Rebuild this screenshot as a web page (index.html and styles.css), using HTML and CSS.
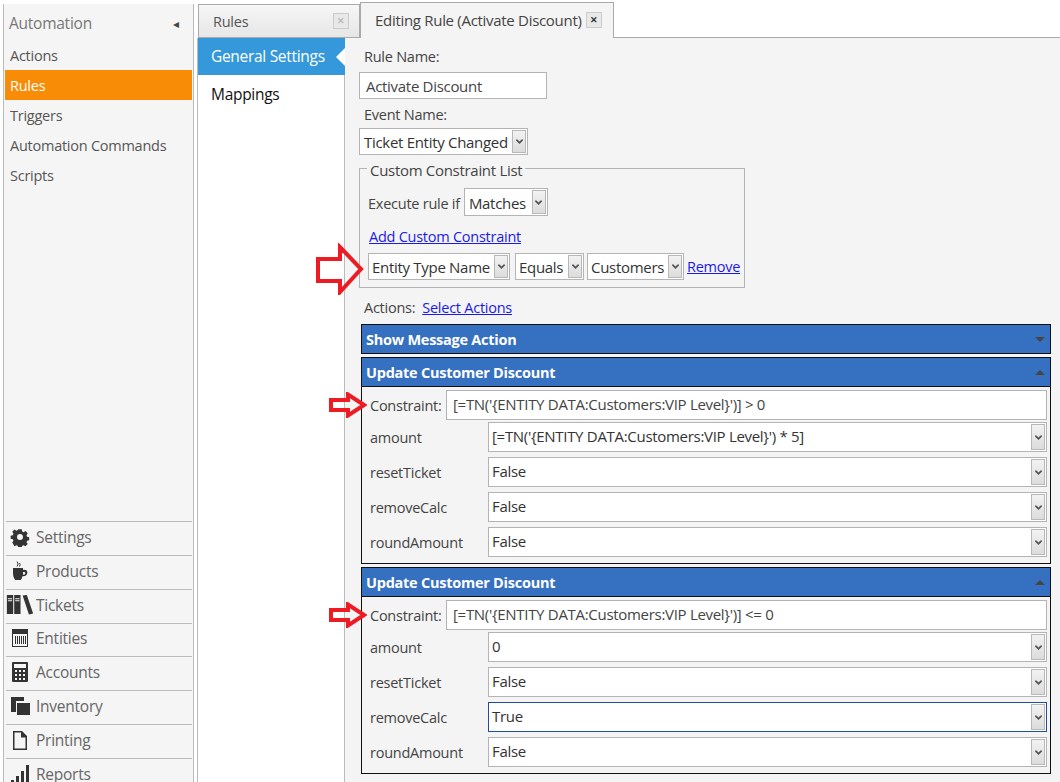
FILE: index.html
```html
<!DOCTYPE html>
<html lang="en">
<head>
    <meta charset="UTF-8">
    <title>Editing Rule</title>
    <link rel="stylesheet" href="styles.css">
</head>
<body>
    <svg width="0" height="0" class="defs">
        <symbol id="chev" viewBox="0 0 7 5"><path d="M0 0.5 L1.5 0.5 L3.5 2.5 L5.5 0.5 L7 0.5 L7 1.5 L3.5 5 L0 1.5 Z"/></symbol>
    </svg>

    <aside class="sidebar">
        <div class="side-title"><span>Automation</span><span class="collapse">&#9666;</span></div>
        <div class="side-item">Actions</div>
        <div class="side-item active">Rules</div>
        <div class="side-item">Triggers</div>
        <div class="side-item">Automation Commands</div>
        <div class="side-item">Scripts</div>

        <div class="side-bottom">
            <div class="nav-item">
                <svg class="nav-icon" viewBox="0 0 20 20"><path fill-rule="evenodd" d="M8 1h4l.6 2.6 1.600.7 2.300-1.400 2.600 2.800-1.400 2.200.6 1.700 2.500.6v3.600l-2.500.6-.6 1.700 1.400 2.200-2.700 2.700-2.200-1.400-1.700.7-.5 2.500H8l-.6-2.500-1.700-.7-2.200 1.400L.9 16.600l1.400-2.200-.7-1.700L-1 12V8.400l2.600-.6.7-1.700L.9 3.900l2.600-2.800 2.200 1.400 1.700-.7zM10 6.500a3.500 3.500 0 1 0 0 7 3.500 3.500 0 0 0 0-7z" transform="translate(1.500 1.500) scale(.85)"/></svg>
                <span>Settings</span>
            </div>
            <div class="nav-item">
                <svg class="nav-icon" viewBox="0 0 20 20"><path d="M3 7h10v2c3.200-.6 4.800 1 4.300 3.200-.4 2.200-2.500 3.200-4.700 2.900-.3 2-1.300 3.300-2 3.900H5.500C4 18 3 15 3 12zM13 11v2.600c1.700.2 2.300-.5 2.300-1.400S14.700 10.700 13 11z"/><path d="M7 .5l1.200 2.500-1.200 2.500M9.500 2l.7 1.700-.7 1.800" fill="none" stroke="#222" stroke-width=".9"/></svg>
                <span>Products</span>
            </div>
            <div class="nav-item">
                <svg class="nav-icon wide" viewBox="0 0 25 20"><path fill-rule="evenodd" d="M0 1h6v18H0zM1 4v1h4V4zM1 6v1h4V6zM7 1h6v18H7zM8 4v1h4V4zM8 6v1h4V6z"/><path d="M15 1.500l4-.5 6 17.500-4 1z"/></svg>
                <span>Tickets</span>
            </div>
            <div class="nav-item">
                <svg class="nav-icon" viewBox="0 0 20 20"><path fill-rule="evenodd" d="M2 1h16v18H2zM3 6v12h14V6z"/><path d="M5 8h1v8H5zM7 8h1v8H7zM9 8h1v8H9zM11 8h1v8h-1zM13 8h1v8h-1zM15 8h1v8h-1z"/></svg>
                <span>Entities</span>
            </div>
            <div class="nav-item">
                <svg class="nav-icon" viewBox="0 0 20 20"><path fill-rule="evenodd" d="M3 0h14a1 1 0 0 1 1 1v18a1 1 0 0 1-1 1H3a1 1 0 0 1-1-1V1a1 1 0 0 1 1-1zM4 2v4h12V2zM5 8v2h2V8zM9 8v2h2V8zM13 8v2h2V8zM5 12v2h2v-2zM9 12v2h2v-2zM13 12v2h2v-2zM5 16v2h2v-2zM9 16v2h2v-2zM13 16v2h2v-2z"/></svg>
                <span>Accounts</span>
            </div>
            <div class="nav-item">
                <svg class="nav-icon" viewBox="0 0 22 20"><path d="M2 1h13v4H7v11H2z"/><path d="M8 7h13v12H8z"/></svg>
                <span>Inventory</span>
            </div>
            <div class="nav-item">
                <svg class="nav-icon" viewBox="0 0 20 20"><path fill-rule="evenodd" d="M3 1h9l5 5v14H3zM4.500 2.500v16h11V7.500H11v-5z"/></svg>
                <span>Printing</span>
            </div>
            <div class="nav-item">
                <svg class="nav-icon" viewBox="0 0 20 20"><path d="M1 16h3v4H1zM6 12h3v8H6zM11 7h3v13h-3zM16 1h3v19h-3z"/></svg>
                <span>Reports</span>
            </div>
        </div>
    </aside>

    <main class="main">
        <div class="tabs">
            <div class="tab tab-off"><span>Rules</span><span class="tab-x">&#10005;</span></div>
            <div class="tab tab-on"><span>Editing Rule (Activate Discount)</span><span class="tab-x">&#10005;</span></div>
            <div class="tabs-rest"></div>
        </div>

        <div class="work">
            <nav class="subnav">
                <div class="subnav-item selected">General Settings</div>
                <div class="subnav-item">Mappings</div>
            </nav>

            <section class="editor">
                <div class="field-label first">Rule Name:</div>
                <div class="textbox name-box">Activate Discount</div>
                <div class="field-label event">Event Name:</div>
                <div class="combo event-combo"><span class="combo-text">Ticket Entity Changed</span><span class="combo-btn"><svg><use href="#chev"/></svg></span></div>

                <fieldset class="group">
                    <legend>Custom Constraint List</legend>
                    <div class="exec-row">
                        <span class="exec-label">Execute rule if</span>
                        <div class="combo match-combo"><span class="combo-text">Matches</span><span class="combo-btn"><svg><use href="#chev"/></svg></span></div>
                    </div>
                    <a class="link add-link" href="#">Add Custom Constraint</a>
                    <div class="constraint-row">
                        <div class="combo c1"><span class="combo-text">Entity Type Name</span><span class="combo-btn"><svg><use href="#chev"/></svg></span></div>
                        <div class="combo c2"><span class="combo-text">Equals</span><span class="combo-btn"><svg><use href="#chev"/></svg></span></div>
                        <div class="combo c3"><span class="combo-text">Customers</span><span class="combo-btn"><svg><use href="#chev"/></svg></span></div>
                        <a class="link" href="#">Remove</a>
                    </div>
                    <svg class="arrow arrow-big" viewBox="0 0 48 52"><path d="M2 16H24V4L45 26 24 49V38H2Z" fill="none" stroke="#ed1c24" stroke-width="4"/></svg>
                </fieldset>

                <div class="actions-line"><span>Actions:</span><a class="link" href="#">Select Actions</a></div>

                <div class="panel">
                    <div class="panel-head"><span>Show Message Action</span><span class="caret down"></span></div>
                </div>

                <div class="panel">
                    <div class="panel-head"><span>Update Customer Discount</span><span class="caret up"></span></div>
                    <div class="panel-body">
                        <div class="row con-row">
                            <label>Constraint:</label>
                            <div class="textbox grow">[=TN('{ENTITY DATA:Customers:VIP Level}')] &gt; 0</div>
                        </div>
                        <div class="row">
                            <label>amount</label>
                            <div class="combo grow"><span class="combo-text">[=TN('{ENTITY DATA:Customers:VIP Level}') * 5]</span><span class="combo-btn"><svg><use href="#chev"/></svg></span></div>
                        </div>
                        <div class="row">
                            <label>resetTicket</label>
                            <div class="combo grow"><span class="combo-text">False</span><span class="combo-btn"><svg><use href="#chev"/></svg></span></div>
                        </div>
                        <div class="row">
                            <label>removeCalc</label>
                            <div class="combo grow"><span class="combo-text">False</span><span class="combo-btn"><svg><use href="#chev"/></svg></span></div>
                        </div>
                        <div class="row">
                            <label>roundAmount</label>
                            <div class="combo grow"><span class="combo-text">False</span><span class="combo-btn"><svg><use href="#chev"/></svg></span></div>
                        </div>
                        <svg class="arrow arrow-small" viewBox="0 0 38 26"><path d="M2 8H19V2.500L35 13 19 23.500V18H2Z" fill="none" stroke="#ed1c24" stroke-width="4"/></svg>
                    </div>
                </div>

                <div class="panel">
                    <div class="panel-head"><span>Update Customer Discount</span><span class="caret up"></span></div>
                    <div class="panel-body">
                        <div class="row con-row">
                            <label>Constraint:</label>
                            <div class="textbox grow">[=TN('{ENTITY DATA:Customers:VIP Level}')] &lt;= 0</div>
                        </div>
                        <div class="row">
                            <label>amount</label>
                            <div class="combo grow"><span class="combo-text">0</span><span class="combo-btn"><svg><use href="#chev"/></svg></span></div>
                        </div>
                        <div class="row">
                            <label>resetTicket</label>
                            <div class="combo grow"><span class="combo-text">False</span><span class="combo-btn"><svg><use href="#chev"/></svg></span></div>
                        </div>
                        <div class="row">
                            <label>removeCalc</label>
                            <div class="combo grow focused"><span class="combo-text">True</span><span class="combo-btn"><svg><use href="#chev"/></svg></span></div>
                        </div>
                        <div class="row">
                            <label>roundAmount</label>
                            <div class="combo grow"><span class="combo-text">False</span><span class="combo-btn"><svg><use href="#chev"/></svg></span></div>
                        </div>
                        <svg class="arrow arrow-small" viewBox="0 0 38 26"><path d="M2 8H19V2.500L35 13 19 23.500V18H2Z" fill="none" stroke="#ed1c24" stroke-width="4"/></svg>
                    </div>
                </div>
            </section>
        </div>
    </main>
</body>
</html>
```

FILE: styles.css
```css
* {
    box-sizing: border-box;
}

html, body {
    margin: 0;
    padding: 0;
    height: 782px;
    overflow: hidden;
}

body {
    display: flex;
    background: white;
    font-family: "Open Sans", "Noto Sans", sans-serif;
    font-size: 14.500px;
    letter-spacing: -0.25px;
    color: #444;
}

.defs {
    position: absolute;
}

/* left menu */
.sidebar {
    width: 191px;
    height: 778px;
    margin: 4px 0 0 3px;
    background: #f5f5f5;
    border-left: 1px solid #bbb;
    border-right: 1px solid #bbb;
    display: flex;
    flex-direction: column;
}

.side-title {
    height: 36px;
    padding: 2px 14px 0 5px;
    display: flex;
    align-items: center;
    justify-content: space-between;
    font-size: 15.500px;
    color: #777;
}

.collapse {
    font-size: 12px;
    color: #444;
}

.side-item {
    height: 30px;
    margin: 0 1px 0 1px;
    padding-left: 5px;
    line-height: 32px;
    color: #555;
}

.side-item.active {
    background: #f98c07;
    color: white;
}

.side-bottom {
    margin-top: auto;
    margin-bottom: -10px;
}

.nav-item {
    height: 33.900px;
    margin: 0 1px 0 2px;
    padding-bottom: 3px;
    border-top: 1px solid #bbb;
    display: flex;
    align-items: center;
    font-size: 15.500px;
    color: #666;
}

.nav-item span {
    margin-left: 2px;
}

.nav-icon {
    width: 28px;
    height: 20px;
    fill: #333;
    flex: none;
}

.nav-icon.wide {
    height: 21px;
}

/* tabs */
.main {
    flex: 1;
    min-width: 0;
    margin-left: 3px;
    display: flex;
    flex-direction: column;
}

.tabs {
    height: 38px;
    display: flex;
    align-items: flex-end;
}

.tab {
    display: flex;
    align-items: center;
    height: 34px;
    border: 1px solid #aaa;
    border-bottom: none;
}

.tab-off {
    width: 162px;
    margin-left: 1px;
    padding: 0 10px 0 14px;
    justify-content: space-between;
    background: linear-gradient(#f6f6f6, #e6e6e6);
    border-bottom: 1px solid #aaa;
    color: #555;
}

.tab-on {
    width: 254px;
    height: 36px;
    padding: 0 0 2px 14px;
    gap: 4px;
    background: #f4f4f4;
    font-size: 15px;
    letter-spacing: -0.3px;
}

.tab-x {
    width: 16px;
    height: 16px;
    background: #e8e8e8;
    border: 1px solid #ccc;
    text-align: center;
    line-height: 14px;
    font-size: 9px;
    font-weight: 700;
    letter-spacing: 0;
    color: #bbb;
}

.tab-on .tab-x {
    color: #333;
}

.tabs-rest {
    flex: 1;
    border-bottom: 1px solid #aaa;
}

/* work area */
.work {
    flex: 1;
    min-height: 0;
    display: flex;
}

.subnav {
    width: 148px;
    background: white;
    border-left: 1px solid #bbb;
    border-right: 1px solid #bbb;
    flex: none;
}

.subnav-item {
    height: 37px;
    padding-left: 13px;
    line-height: 36px;
    font-size: 15.500px;
    letter-spacing: -0.3px;
    color: #111;
}

.subnav-item + .subnav-item {
    margin-top: 1px;
}

.subnav-item.selected {
    position: relative;
    width: 147px;
    background: #3498db;
    color: white;
}

.subnav-item.selected::after {
    content: "";
    position: absolute;
    right: 0;
    top: 10px;
    border: 9px solid transparent;
    border-left: none;
    border-right-color: white;
}

.editor {
    flex: 1;
    min-width: 0;
    background: #f4f4f4;
    padding-left: 14px;
}

.field-label {
    margin-left: 5px;
    height: 20px;
    line-height: 20px;
}

.field-label.first {
    margin-top: 9px;
    height: 25px;
}

.field-label.event {
    margin-top: 6px;
    height: 23px;
}

.textbox {
    height: 27px;
    line-height: 27px;
    padding-left: 6px;
    background: white;
    border: 1px solid #b4b4b4;
    white-space: nowrap;
    font-size: 15px;
    letter-spacing: -0.3px;
}

.name-box {
    width: 188px;
}

/* fake combo boxes, same look as the WPF ones */
.combo {
    display: flex;
    align-items: stretch;
    justify-content: space-between;
    height: 27px;
    padding: 1px;
    background: white;
    border: 1px solid #b4b4b4;
    white-space: nowrap;
    font-size: 15px;
    letter-spacing: -0.3px;
}

.combo-text {
    padding-left: 3px;
    line-height: 25px;
    color: #333;
}

.combo-btn {
    width: 14px;
    flex: none;
    background: linear-gradient(#f2f2f2, #dcdcdc);
    border: 1px solid #b8b8b8;
    display: flex;
    align-items: center;
    justify-content: center;
}

.combo-btn svg {
    width: 7px;
    height: 5px;
    fill: #555;
}

.event-combo {
    width: 169px;
}

.group {
    position: relative;
    width: 386px;
    height: 133px;
    margin: 0;
    padding: 0 0 0 8px;
    border: 1px solid #b4b4b4;
    background: #f4f4f4;
}

.group legend {
    margin-left: -1px;
    padding: 5px 3px 1px;
    height: 26px;
    line-height: 20px;
    font-size: 15px;
    letter-spacing: -0.3px;
}

.exec-row {
    display: flex;
    align-items: center;
    gap: 4px;
    height: 28px;
    margin-top: 7px;
}

.exec-label {
    padding-top: 3px;
}

.match-combo {
    width: 84px;
    height: 28px;
}

.match-combo .combo-text {
    line-height: 26px;
}

.add-link {
    display: block;
    margin: 11px 0 0 1px;
    line-height: 20px;
}

.link {
    color: #1a1aee;
    text-decoration: underline;
}

.constraint-row {
    display: flex;
    align-items: center;
    margin-top: 6px;
}

.constraint-row .combo {
    height: 27px;
}

.constraint-row .combo-text {
    padding-left: 2px;
}

.c1 {
    width: 142px;
}

.c2 {
    width: 69px;
    margin-left: 5px;
}

.c3 {
    width: 97px;
    margin-left: 3px;
}

.constraint-row .link {
    margin-left: 3px;
}

.actions-line {
    display: flex;
    gap: 7px;
    margin: 10px 0 0 5px;
    height: 20px;
    line-height: 20px;
}

/* action panels */
.panel {
    width: 690px;
    margin: 0 0 3px 2px;
    border: 1px solid #111;
}

.actions-line + .panel {
    margin-top: 6px;
}

.panel-head {
    height: 28px;
    padding: 0 4px;
    display: flex;
    align-items: center;
    justify-content: space-between;
    background: #3670c0;
    color: white;
    font-weight: 700;
    font-size: 14.500px;
}

.caret {
    margin-right: 1px;
    border-left: 5px solid transparent;
    border-right: 5px solid transparent;
}

.caret.down {
    border-top: 5px solid #444;
}

.caret.up {
    border-bottom: 5px solid #444;
}

.panel-body {
    position: relative;
    height: 177px;
    padding: 3px 3px 0 8px;
    border-top: 1px solid #111;
}

.row {
    display: flex;
    align-items: center;
    margin-top: 5px;
}

.row label {
    width: 118px;
    flex: none;
}

.row .combo, .row .textbox {
    height: 30px;
}

.row .combo-text {
    padding-left: 2px;
    line-height: 24px;
}

.row .textbox {
    line-height: 27px;
}

.row.con-row {
    margin-top: 0;
    margin-bottom: -3px;
}

.con-row label {
    width: 76px;
}

.grow {
    flex: 1;
    min-width: 0;
}

.combo.focused {
    border-color: #1f4f96;
}

/* red annotations pasted on the screenshot */
.arrow {
    position: absolute;
}

.arrow-big {
    left: -44px;
    top: 62px;
    width: 48px;
    height: 52px;
}

.arrow-small {
    left: -33px;
    top: 5px;
    width: 38px;
    height: 26px;
}
```
